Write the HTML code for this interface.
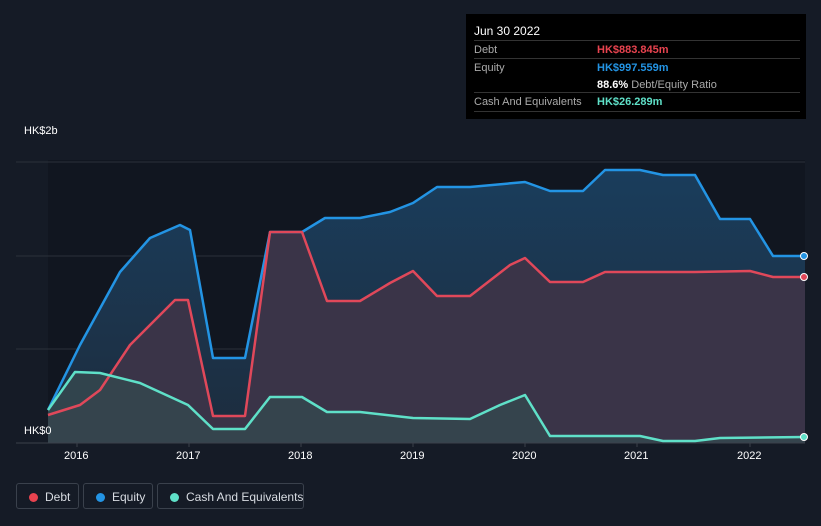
<!DOCTYPE html>
<html><head><style>
body{margin:0;width:821px;height:526px;background:#151b26;font-family:"Liberation Sans",sans-serif;overflow:hidden;position:relative}
.tt{position:absolute;left:466px;top:14px;width:340px;height:105px;background:#000;color:#fff;font-size:11px}
.tt .r{position:absolute;left:8px;right:6px;height:18px;line-height:18px;border-top:1px solid #333}
.tt .l{color:#aaa;position:absolute;left:0}
.tt .v{position:absolute;left:123px;font-weight:bold}
.leg{position:absolute;top:483px;height:26px;border:1px solid #3a414c;border-radius:3px;color:#d8dce2;font-size:12px;line-height:26px;box-sizing:border-box;white-space:nowrap}
.leg i{position:absolute;top:9px;left:12px;width:9px;height:9px;border-radius:50%}
.leg span{position:absolute;left:28px}
.ax{position:absolute;color:#fff;font-size:11px}
</style></head><body>
<svg width="821" height="526" style="position:absolute;left:0;top:0">
<defs>
<linearGradient id="ge" x1="0" y1="0" x2="0" y2="1"><stop offset="0" stop-color="#1a3d5c"/><stop offset="1" stop-color="#1d2c3d"/></linearGradient>
</defs>
<rect x="48" y="160" width="757" height="283" fill="#111620"/>
<line x1="16" y1="162" x2="805" y2="162" stroke="#2a303a"/>
<line x1="16" y1="256" x2="805" y2="256" stroke="#2a303a"/>
<line x1="16" y1="349" x2="805" y2="349" stroke="#2a303a"/>
<polygon fill="url(#ge)" points="48,443 48,410 80,345 120,272 150,238 180,225 190,230 213,358 245,358 270,232 302,232 325,218 360,218 390,212 413,203 437,187 470,187 525,182 550,191 583,191 605,170 640,170 663,175 695,175 720,219 750,219 773,256 805,256 805,443"/>
<polygon fill="#3a3448" points="48,443 48,415 80,405 100,390 130,345 175,300 188,300 213,416 245,416 270,232 302,232 327,301 360,301 390,283 413,271 437,296 470,296 510,265 525,258 550,282 583,282 605,272 695,272 750,271 773,277 805,277 805,443"/>
<polygon fill="#35484f" opacity="0.85" points="48,443 48,410 75,372 100,373 140,383 188,405 213,429 245,429 270,397 302,397 327,412 360,412 413,418 470,419 500,405 525,395 550,436 583,436 640,436 663,441 695,441 720,438 805,437 805,443"/>
<polyline fill="none" stroke="#2394e4" stroke-width="2.5" stroke-linejoin="round" points="48,410 80,345 120,272 150,238 180,225 190,230 213,358 245,358 270,232 302,232 325,218 360,218 390,212 413,203 437,187 470,187 525,182 550,191 583,191 605,170 640,170 663,175 695,175 720,219 750,219 773,256 805,256"/>
<polyline fill="none" stroke="#e0485a" stroke-width="2.5" stroke-linejoin="round" points="48,415 80,405 100,390 130,345 175,300 188,300 213,416 245,416 270,232 302,232 327,301 360,301 390,283 413,271 437,296 470,296 510,265 525,258 550,282 583,282 605,272 695,272 750,271 773,277 805,277"/>
<polyline fill="none" stroke="#5fe0c8" stroke-width="2.5" stroke-linejoin="round" points="48,410 75,372 100,373 140,383 188,405 213,429 245,429 270,397 302,397 327,412 360,412 413,418 470,419 500,405 525,395 550,436 583,436 640,436 663,441 695,441 720,438 805,437"/>
<line x1="16" y1="443" x2="805" y2="443" stroke="#3a404a"/>
<g stroke="#3a404a"><line x1="77" y1="443" x2="77" y2="447"/><line x1="189" y1="443" x2="189" y2="447"/><line x1="301" y1="443" x2="301" y2="447"/><line x1="413" y1="443" x2="413" y2="447"/><line x1="525" y1="443" x2="525" y2="447"/><line x1="637" y1="443" x2="637" y2="447"/><line x1="750" y1="443" x2="750" y2="447"/></g>
<circle cx="804" cy="256" r="3.5" fill="#2394e4" stroke="#fff" stroke-width="1"/>
<circle cx="804" cy="277" r="3.5" fill="#e0485a" stroke="#fff" stroke-width="1"/>
<circle cx="804" cy="437" r="3.5" fill="#5fe0c8" stroke="#fff" stroke-width="1"/>
</svg>
<div class="ax" style="left:24px;top:125px">HK$2b</div>
<div class="ax" style="left:24px;top:425px">HK$0</div>
<div class="ax" style="left:64px;top:450px">2016</div>
<div class="ax" style="left:176px;top:450px">2017</div>
<div class="ax" style="left:288px;top:450px">2018</div>
<div class="ax" style="left:400px;top:450px">2019</div>
<div class="ax" style="left:512px;top:450px">2020</div>
<div class="ax" style="left:624px;top:450px">2021</div>
<div class="ax" style="left:737px;top:450px">2022</div>
<div class="tt">
<div style="position:absolute;left:8px;top:10px;font-size:12px">Jun 30 2022</div>
<div class="r" style="top:26px"><span class="l">Debt</span><span class="v" style="color:#e8434f">HK$883.845m</span></div>
<div class="r" style="top:44px"><span class="l">Equity</span><span class="v" style="color:#2394e4">HK$997.559m</span></div>
<div class="r" style="top:62px;border-top:none"><span class="v" style="color:#fff">88.6% <span style="color:#aaa;font-weight:normal">Debt/Equity Ratio</span></span></div>
<div class="r" style="top:78px;border-bottom:1px solid #333"><span class="l">Cash And Equivalents</span><span class="v" style="color:#5fe0c8">HK$26.289m</span></div>
</div>
<div class="leg" style="left:16px;width:63px"><i style="background:#e8434f"></i><span>Debt</span></div>
<div class="leg" style="left:83px;width:70px"><i style="background:#2394e4"></i><span>Equity</span></div>
<div class="leg" style="left:157px;width:147px"><i style="background:#5fe0c8"></i><span>Cash And Equivalents</span></div>
</body></html>
